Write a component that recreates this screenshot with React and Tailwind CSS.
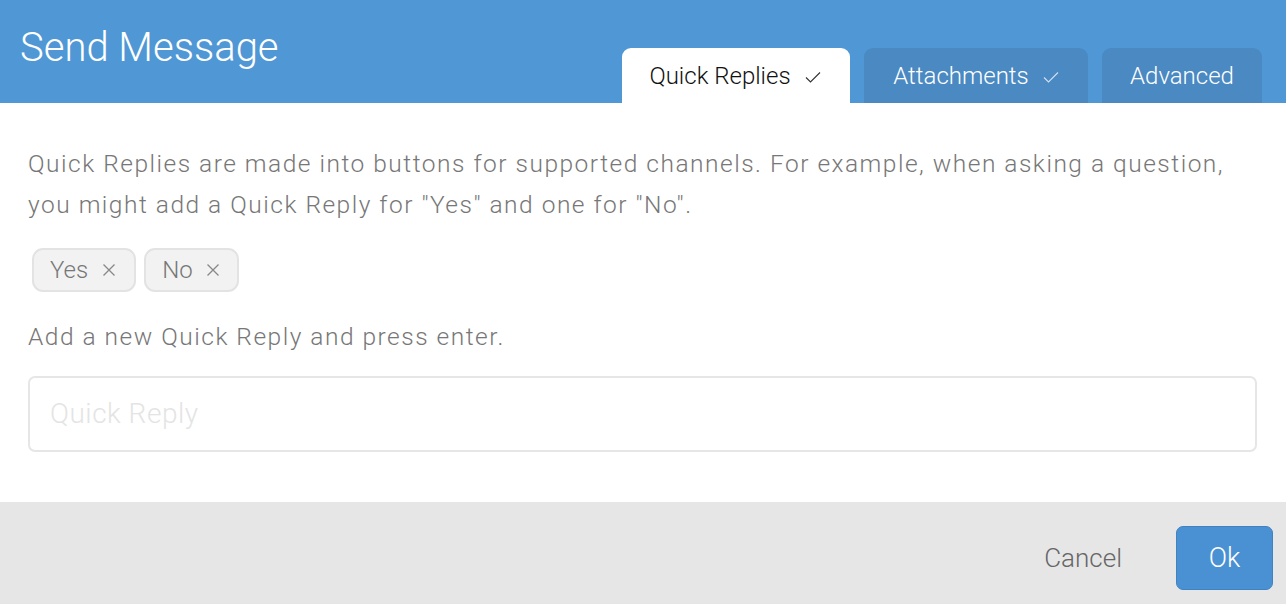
import React from "react";

const Check = ({ className }) => (
  <svg className={className} width="16" height="12" viewBox="0 0 16 12" fill="none">
    <path d="M1 6.5 L5.5 11 L15 1.5" stroke="currentColor" strokeWidth="1.1" />
  </svg>
);

const X = () => (
  <svg width="14" height="14" viewBox="0 0 14 14" fill="none">
    <path d="M1.5 1.5 L12.5 12.5 M12.5 1.5 L1.5 12.5" stroke="#888" strokeWidth="1.3" />
  </svg>
);

export default function App() {
  return (
    <div className="w-[1286px] h-[604px] bg-white flex flex-col overflow-hidden" style={{ fontFamily: "Roboto, 'Liberation Sans', sans-serif" }}>
      <div className="h-[103px] bg-[#5097d5] flex items-end justify-between pl-[20px] pr-[24px]">
        <div className="self-start pt-[22px] text-white text-[40px] font-light leading-[52px]">Send Message</div>
        <div className="flex gap-[14px]">
          <div className="h-[55px] w-[228px] bg-white rounded-t-[9px] flex items-center justify-center gap-[14px] text-[24px] font-light text-[#111] pr-[2px]">
            <span>Quick Replies</span>
            <Check className="text-[#333] mt-[3px]" />
          </div>
          <div className="h-[55px] w-[224px] bg-[#4a89c2] rounded-t-[9px] flex items-center justify-center gap-[14px] text-[24px] font-light text-white">
            <span>Attachments</span>
            <Check className="text-[#cfe0f0] mt-[3px]" />
          </div>
          <div className="h-[55px] w-[160px] bg-[#4a89c2] rounded-t-[9px] flex items-center justify-center text-[24px] font-light text-white">
            <span>Advanced</span>
          </div>
        </div>
      </div>
      <div className="flex-1 px-[28px] pt-[40px] text-[#777] font-light">
        <p className="text-[24.5px] leading-[41px] tracking-[1.5px]">
          Quick Replies are made into buttons for supported channels. For example, when asking a question, you might add a Quick Reply for "Yes" and one for "No".
        </p>
        <div className="flex gap-[8px] mt-[23px] ml-[4px]">
          <div className="h-[44px] pl-[16px] pr-[18px] flex items-center gap-[14px] rounded-[11px] border-2 border-[#e3e3e3] bg-[#f2f2f2] text-[24px] text-[#777]">
            <span>Yes</span><X />
          </div>
          <div className="h-[44px] pl-[16px] pr-[17px] flex items-center gap-[13px] rounded-[11px] border-2 border-[#e3e3e3] bg-[#f2f2f2] text-[24px] text-[#777]">
            <span>No</span><X />
          </div>
        </div>
        <div className="mt-[24px] text-[24.5px] leading-[42px] tracking-[1.5px]">Add a new Quick Reply and press enter.</div>
        <div className="mt-[18px] h-[76px] w-[1229px] border-2 border-[#e6e6e6] rounded-[7px] flex items-center px-[20px] text-[28px] text-[#e4e4e4] font-light tracking-[0.5px]">
          Quick Reply
        </div>
      </div>
      <div className="h-[102px] bg-[#e6e6e6] flex items-center justify-end pr-[13px] pt-[10px]">
        <span className="text-[26px] font-light text-[#666] mr-[54px]">Cancel</span>
        <div className="w-[97px] h-[64px] rounded-[7px] bg-[#4a91d3] border border-[#3f83c5] flex items-center justify-center text-white text-[27px] font-light">Ok</div>
      </div>
    </div>
  );
}
